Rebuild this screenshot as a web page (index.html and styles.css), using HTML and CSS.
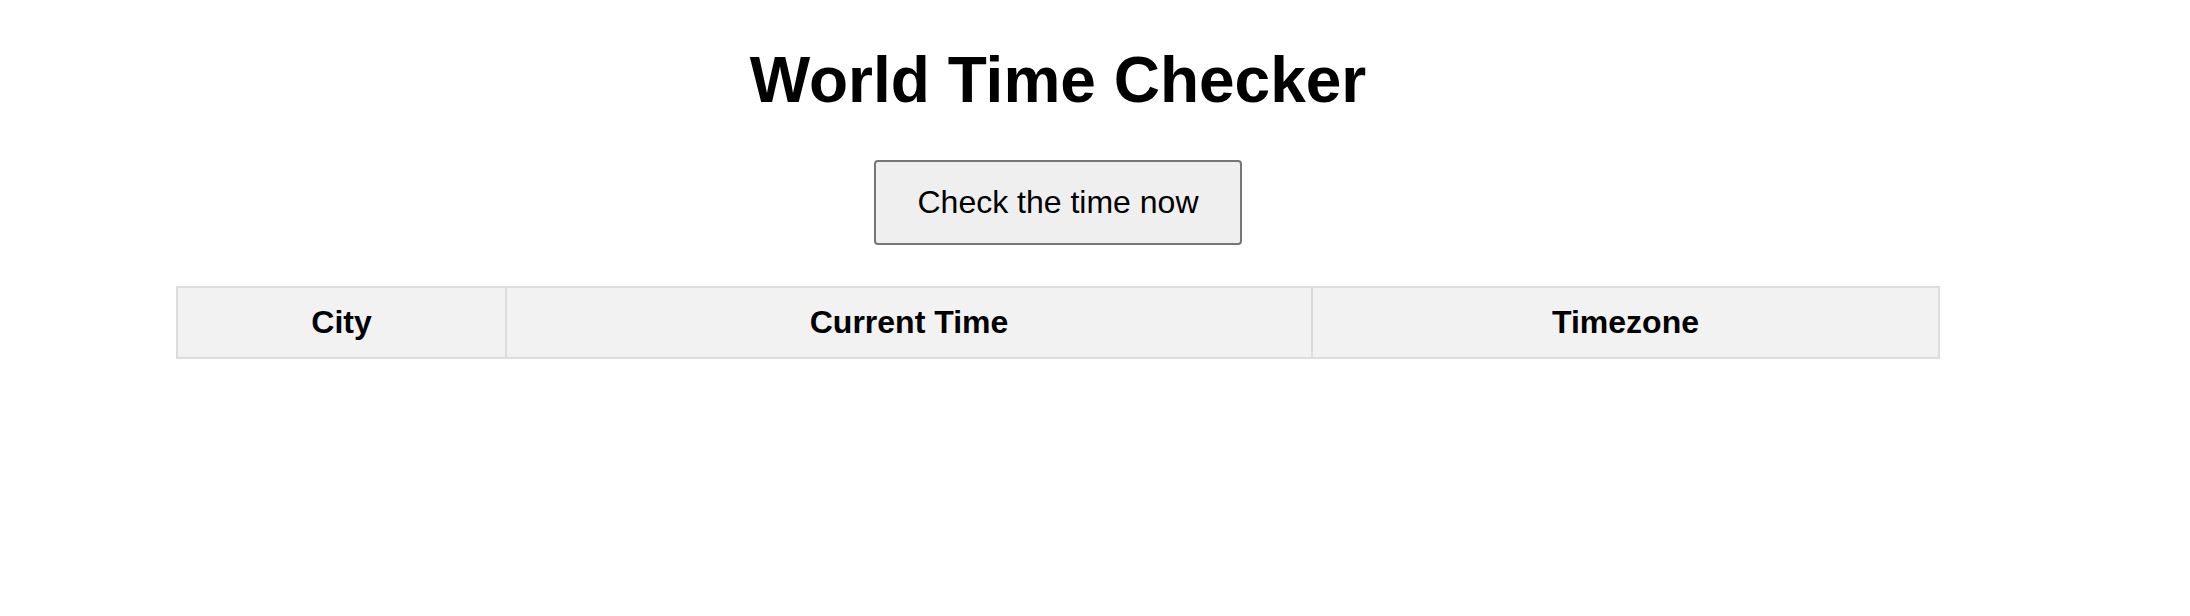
FILE: index.html
```html
<!DOCTYPE html>
<html lang="en">
<head>
<meta charset="utf-8">
<title>World Time Checker</title>
<link rel="stylesheet" href="styles.css">
</head>
<body>
<main class="page">
  <h1 class="title">World Time Checker</h1>
  <div class="actions">
    <button class="check-btn" type="button">Check the time now</button>
  </div>
  <table class="time-table">
    <thead>
      <tr>
        <th class="col-city">City</th>
        <th class="col-time">Current Time</th>
        <th class="col-zone">Timezone</th>
      </tr>
    </thead>
    <tbody></tbody>
  </table>
</main>
</body>
</html>
```

FILE: styles.css
```css
html, body {
  margin: 0;
  padding: 0;
  background: #ffffff;
}

body {
  font-family: "Liberation Sans", Arial, sans-serif;
  color: #000000;
}

.page {
  width: 2116px;
  text-align: center;
}

.title {
  font-size: 64px;
  font-weight: bold;
  line-height: normal;
  margin: 43px 0 43px;
}

.actions {
  display: flex;
  justify-content: center;
  margin-bottom: 41px;
}

.check-btn {
  font-family: "Liberation Sans", Arial, sans-serif;
  font-size: 32px;
  line-height: normal;
  color: #000000;
  background: #efefef;
  border: 2px solid #767676;
  border-radius: 4px;
  padding: 22px 41px;
  margin: 0;
}

.time-table {
  width: 1762px;
  margin: 0 auto;
  border-collapse: collapse;
  table-layout: fixed;
}

.time-table th {
  box-sizing: border-box;
  font-size: 32px;
  font-weight: bold;
  line-height: normal;
  background: #f2f2f2;
  border: 2px solid #dddddd;
  padding: 16px 18px;
  text-align: center;
}

.col-city {
  width: 329px;
}

.col-time {
  width: 806px;
}

.col-zone {
  width: 627px;
}
```
